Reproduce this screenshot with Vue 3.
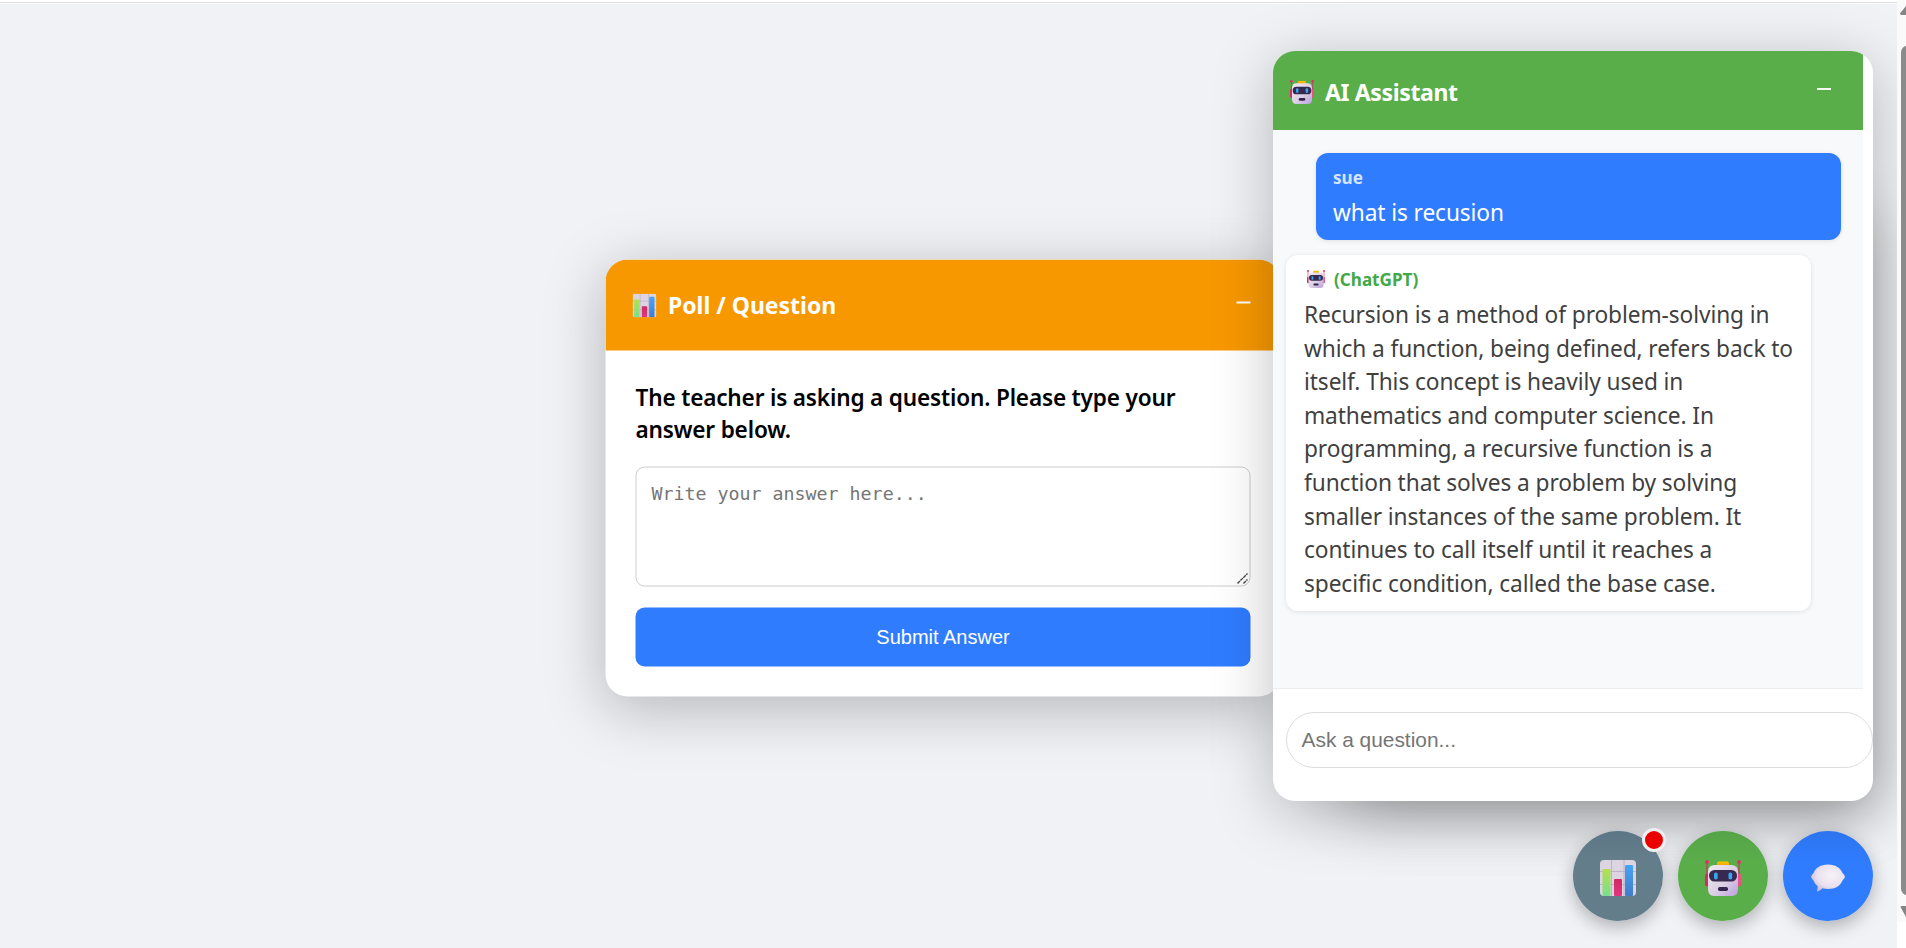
<script setup>
const answerLines = [
  'Recursion is a method of problem-solving in',
  'which a function, being defined, refers back to',
  'itself. This concept is heavily used in',
  'mathematics and computer science. In',
  'programming, a recursive function is a',
  'function that solves a problem by solving',
  'smaller instances of the same problem. It',
  'continues to call itself until it reaches a',
  'specific condition, called the base case.',
]
</script>

<template>
  <div class="page">
    <svg class="defs" width="0" height="0" aria-hidden="true">
      <defs>
        <linearGradient id="g-face" x1="0" y1="0" x2="1" y2="1">
          <stop offset="0" stop-color="#efeaf0" />
          <stop offset=".55" stop-color="#dcd0e4" />
          <stop offset="1" stop-color="#bd9fdf" />
        </linearGradient>
        <linearGradient id="g-green" x1="0" y1="0" x2="0" y2="1">
          <stop offset="0" stop-color="#b4e04b" />
          <stop offset="1" stop-color="#79e08c" />
        </linearGradient>
        <linearGradient id="g-blue" x1="0" y1="0" x2="0" y2="1">
          <stop offset="0" stop-color="#46a5f7" />
          <stop offset="1" stop-color="#417bcb" />
        </linearGradient>
        <linearGradient id="g-pink" x1="0" y1="0" x2="0" y2="1">
          <stop offset="0" stop-color="#cf2b62" />
          <stop offset="1" stop-color="#e3357f" />
        </linearGradient>
        <linearGradient id="g-top" x1="0" y1="0" x2="0" y2="1">
          <stop offset="0" stop-color="#ffc400" />
          <stop offset="1" stop-color="#ee9a12" />
        </linearGradient>
        <radialGradient id="g-bubble" cx=".6" cy=".4" r=".65">
          <stop offset="0" stop-color="#f6f2f8" />
          <stop offset=".65" stop-color="#e9e1ee" />
          <stop offset="1" stop-color="#cbbbd8" />
        </radialGradient>
        <symbol id="robot" viewBox="0 0 36 36">
          <path d="M2 2.500V14M34 2.500V14" stroke="#c93861" stroke-width="1.300" />
          <circle cx="2" cy="2" r="1.900" fill="#e52d63" />
          <circle cx="34" cy="2" r="1.900" fill="#e52d63" />
          <rect x="0" y="13.500" width="5" height="13" rx="2" fill="#d72c63" />
          <rect x="31" y="13.500" width="5" height="13" rx="2" fill="#ea5284" />
          <rect x="12" y="1.500" width="12" height="5" rx="1.800" fill="url(#g-top)" />
          <path d="M10 5h16q7 0 7 7v17q0 7-6 7H9q-6 0-6-7V12q0-7 7-7z" fill="url(#g-face)" />
          <rect x="4" y="10" width="28" height="11.500" rx="5.500" fill="#382951" />
          <rect x="9" y="12.500" width="3.700" height="7" rx="1.700" fill="#38a6ef" />
          <rect x="23.500" y="12.500" width="3.700" height="7" rx="1.700" fill="#38a6ef" />
          <rect x="13" y="27" width="10" height="4" rx="1.700" fill="#36254e" />
        </symbol>
        <symbol id="chart" viewBox="0 0 36 36">
          <rect width="36" height="36" rx="4" fill="#dcd4e0" />
          <path d="M11.500 0v36M24 0v36M0 11.500h36M0 24.500h36" stroke="#bbaec3" stroke-width=".9" />
          <rect x="2.500" y="9" width="8" height="27" rx="1" fill="url(#g-green)" />
          <rect x="14" y="19" width="8" height="17" rx="1" fill="url(#g-pink)" />
          <rect x="25" y="5" width="8" height="31" rx="1" fill="url(#g-blue)" />
        </symbol>
        <symbol id="bubble" viewBox="0 0 36 28">
          <path d="M18 .5C25.500 .5 30.500 4 32.500 9Q35 11.500 35 12.800T32.500 16.500C30.500 21.500 25.500 25 18 25Q15 25 12.500 24.300 10 27 7.500 27.600 6.600 27.600 7 26.500 7.900 24 7.600 22 4.700 20 3.500 16.500 1 14 1 12.800T3.500 9C5.500 4 10.500 .5 18 .5z" fill="url(#g-bubble)" />
        </symbol>
      </defs>
    </svg>

    <section class="poll">
      <header class="poll-head">
        <svg class="head-icon"><use href="#chart" /></svg>
        <h2>Poll / Question</h2>
        <i class="minimize"></i>
      </header>
      <div class="poll-body">
        <p>The teacher is asking a question. Please type your<br />answer below.</p>
        <div class="answer">
          <span>Write your answer here...</span>
          <svg class="grip" width="12" height="12" viewBox="0 0 12 12">
            <path d="M1 11L11 1M7 11L11 7" stroke="#4a4a4a" stroke-width="1.400" stroke-dasharray="3.500 .6" />
          </svg>
        </div>
        <button>Submit Answer</button>
      </div>
    </section>

    <div class="under"></div>
    <section class="assistant">
      <header class="ai-head">
        <svg class="head-icon"><use href="#robot" /></svg>
        <h2>AI Assistant</h2>
        <i class="minimize"></i>
      </header>
      <div class="messages">
        <article class="msg mine">
          <div class="who"><span>sue</span></div>
          <div class="said">what is recusion</div>
        </article>
        <article class="msg bot">
          <div class="who"><svg><use href="#robot" /></svg><span>(ChatGPT)</span></div>
          <div class="said"><div v-for="line in answerLines" :key="line">{{ line }}</div></div>
        </article>
      </div>
      <div class="composer"><div class="ask">Ask a question...</div></div>
    </section>

    <nav class="fabs">
      <div class="fab slate"><svg><use href="#chart" /></svg><b class="dot"></b></div>
      <div class="fab green"><svg><use href="#robot" /></svg></div>
      <div class="fab blue"><svg class="talk"><use href="#bubble" /></svg></div>
    </nav>

    <aside class="scroll">
      <svg width="9" height="948" viewBox="0 0 9 948">
        <path d="M3 13.500Q3 15 5 15H9V6Z" fill="#858585" />
        <rect x="4" y="45.500" width="14" height="850" rx="7" fill="#8b8b8b" />
        <path d="M3.500 907Q3.500 906 5 906H9V917Z" fill="#858585" />
        <rect y="922" width="9" height="26" fill="#fff" />
      </svg>
    </aside>
  </div>
</template>

<style>
html, body { margin: 0; overflow: hidden; }
</style>

<style scoped>
* { box-sizing: border-box; }
.page {
  position: relative;
  width: 1906px;
  height: 948px;
  overflow: hidden;
  background: #f0f2f6;
  font-family: "Noto Sans", sans-serif;
}
.page::before {
  content: "";
  position: absolute;
  inset: 0 0 auto;
  height: 4px;
  background: linear-gradient(#fff 2px, #dfdfdf 2px 3px, #fbfbfc 3px);
}
.defs { position: absolute; }
h2 { margin: 0; color: #fff; font-size: 23px; font-weight: 700; line-height: 32px; white-space: nowrap; }
.head-icon { width: 24px; height: 24px; flex: none; }
.minimize { width: 14px; height: 2px; background: #fff; margin-left: auto; }

/* Floating windows */
.poll {
  position: absolute;
  left: 606px;
  top: 260px;
  width: 675px;
  height: 437px;
  transform: translate(-.5px, -.5px);
  border-radius: 22px;
  background: #fff;
  overflow: hidden;
  box-shadow: 0 12px 60px rgba(0, 0, 0, .25);
}
.poll-head { display: flex; align-items: center; height: 90.500px; padding: 0 30.500px 0 26.500px; background: #f89800; }
.poll-head h2 { margin-left: 12px; letter-spacing: -.02px; }
.poll-head .head-icon { margin-top: 1px; }
.poll-head .minimize { margin-top: -4px; }
.poll-body { padding: 31px 30px 0; }
.poll-body p { margin: 0; font-size: 22.600px; font-weight: 600; line-height: 32px; color: #000; letter-spacing: -.18px; white-space: nowrap; }
.answer {
  position: relative;
  height: 120px;
  margin-top: 21px;
  padding: 13px 15px;
  border: 1px solid #ccc;
  border-radius: 9px;
  font: 18.300px/26px "DejaVu Sans Mono", monospace;
  color: #757575;
}
.grip { position: absolute; right: 1px; bottom: 1px; }
.poll-body button {
  display: block;
  width: 100%;
  height: 59px;
  margin-top: 21px;
  padding: 0;
  border: 0;
  border-radius: 9px;
  background: #2f7cff;
  color: #fff;
  font: 20px "Liberation Sans", Arial, sans-serif;
}
/* Second window stacked beneath the assistant; only its shadow shows */
.under {
  position: absolute;
  left: 1348px;
  top: 201px;
  width: 525px;
  height: 600px;
  border-radius: 22px;
  box-shadow: 0 12px 60px rgba(0, 0, 0, .25);
}
.assistant {
  position: absolute;
  left: 1273px;
  top: 51px;
  width: 600px;
  height: 750px;
  border-radius: 22px;
  background: #fff;
  overflow: hidden;
  box-shadow: 0 12px 60px rgba(0, 0, 0, .25);
}
.ai-head { display: flex; align-items: center; width: 590px; height: 79px; padding: 2px 32px 0 17px; background: #5aae4a; }
.ai-head h2 { margin-left: 11px; letter-spacing: -.36px; }
.ai-head .minimize { margin-top: -5px; }
.messages { width: 590px; height: 559px; padding: 23px 22px 0 13px; background: #f8f9fb; border-bottom: 1px solid #eee; }
.msg { width: 525px; border-radius: 12px; padding: 10px 17px 0; box-shadow: 0 1px 5px rgba(0, 0, 0, .1); }
.mine { height: 87px; margin-left: auto; background: #2f7cff; color: #fff; }
.bot { height: 356px; margin-top: 15px; padding-left: 18px; background: #fff; color: #3f3f3f; }
.who { display: flex; align-items: center; height: 28px; font-size: 17.100px; font-weight: 700; }
.mine .who { opacity: .8; }
.bot .who { color: #43a846; }
.who svg { width: 18px; height: 18px; margin: 0 9px 0 3px; }
.said { padding-top: 5px; font-size: 22.700px; line-height: 33.600px; letter-spacing: -.09px; white-space: nowrap; }
.composer { padding: 23px 0 0 13px; }
.ask {
  height: 56px;
  padding-left: 14.500px;
  border: 1px solid #ddd;
  border-radius: 28px;
  color: #757575;
  font: 20.900px/54px "Liberation Sans", Arial, sans-serif;
}

/* Launcher buttons */
.fabs { position: absolute; right: 33px; bottom: 27px; display: flex; gap: 15px; }
.fab {
  position: relative;
  display: flex;
  align-items: center;
  justify-content: center;
  width: 90px;
  height: 90px;
  padding-top: 4px;
  border-radius: 50%;
  box-shadow: 0 6px 18px rgba(0, 0, 0, .28);
}
.fab svg { width: 36px; height: 36px; }
.fab .talk { height: 28px; }
.slate { background: linear-gradient(#5d7685, #647d8b 30%); }
.green { background: linear-gradient(#55a448, #5aae4a 35%); }
.blue { background: linear-gradient(#2d74ee, #2f7cff 35%); }
.dot { position: absolute; right: -3px; top: -3px; width: 24px; height: 24px; border-radius: 50%; border: 3px solid #f0f0f0; background: #eb0000; }
.scroll { position: absolute; right: 0; top: 0; height: 948px; background: #fafafa; }
.scroll svg { display: block; }
</style>
